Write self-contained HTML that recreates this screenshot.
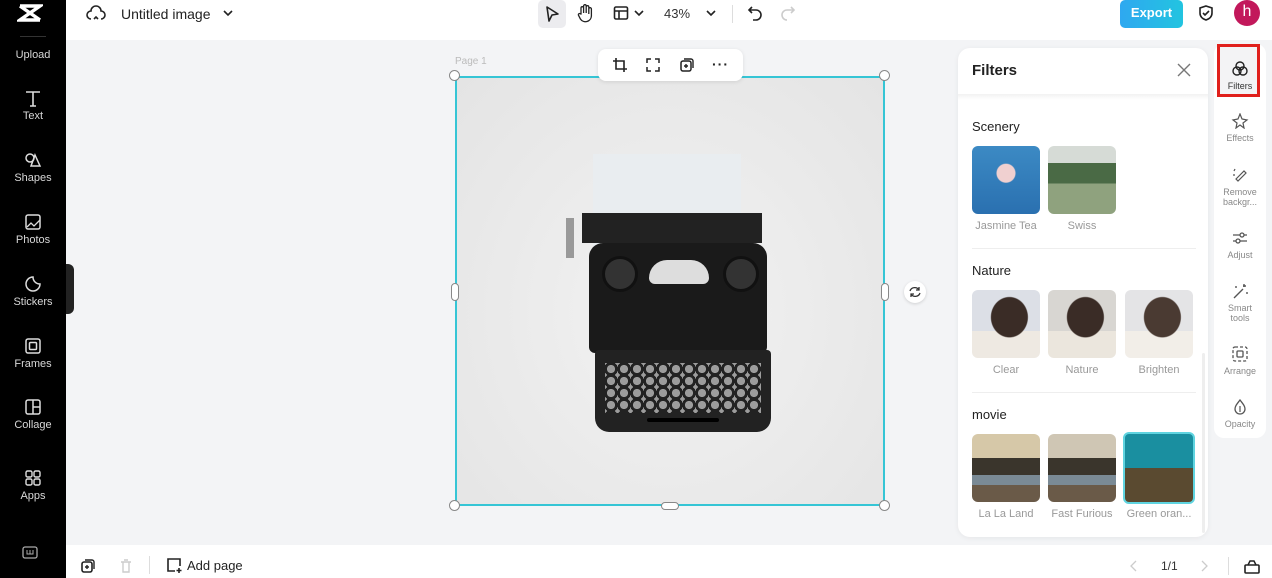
<!DOCTYPE html>
<html><head><meta charset="utf-8"><style>
*{box-sizing:border-box;margin:0;padding:0}
body{width:1272px;height:578px;overflow:hidden;background:#f3f4f6;font-family:"Liberation Sans",sans-serif;position:relative;color:#222}
.abs{position:absolute}
.side{left:0;top:0;width:66px;height:578px;background:#000;color:#ddd}
.side .it{position:absolute;left:0;width:66px;text-align:center;font-size:11px;color:#d8d8d8}
.side svg{display:block;margin:0 auto 3px}
.top{left:66px;top:0;width:1206px;height:40px;background:#fff}
.bot{left:66px;top:545px;width:1206px;height:33px;background:#fff}
.panel{left:958px;top:48px;width:250px;height:489px;background:#fff;border-radius:12px;box-shadow:0 1px 6px rgba(0,0,0,.06)}
.th{position:absolute;width:68px;height:68px;border-radius:6px;overflow:hidden}
.lb{position:absolute;width:80px;text-align:center;font-size:11px;color:#999}
.st{position:absolute;left:14px;font-size:13px;color:#222}
.tools{left:1214px;top:44px;width:52px;height:394px;background:#fff;border-radius:10px}
.tl{position:absolute;left:0;width:52px;text-align:center;font-size:9px;color:#888;line-height:10px}
.tl svg{display:block;margin:0 auto 4px}
.h{position:absolute;width:11px;height:11px;border-radius:50%;background:#fff;border:1px solid #888}
</style></head><body>
<div class="abs side">
<svg class="abs" style="left:17px;top:3px" width="26" height="20" viewBox="0 0 26 20"><path d="M3 3h20L3 17h20M3 3l20 14" stroke="#fff" stroke-width="3.5" fill="none"/></svg>
<div class="abs" style="left:20px;top:36px;width:26px;height:1px;background:#333"></div>
<div class="it" style="top:49px">Upload</div>
<div class="it" style="top:89px"><svg width="18" height="18" viewBox="0 0 18 18"><path d="M2 3h14M9 3v14M6 17h6" stroke="#ddd" stroke-width="1.6" fill="none"/></svg>Text</div>
<div class="it" style="top:151px"><svg width="18" height="18" viewBox="0 0 18 18"><circle cx="6" cy="7" r="4" stroke="#ddd" stroke-width="1.5" fill="none"/><path d="M11 4l5 11H7z" stroke="#ddd" stroke-width="1.5" fill="none"/></svg>Shapes</div>
<div class="it" style="top:213px"><svg width="18" height="18" viewBox="0 0 18 18"><rect x="2" y="2" width="14" height="14" rx="2" stroke="#ddd" stroke-width="1.5" fill="none"/><path d="M3 14l4-4 3 3 6-6" stroke="#ddd" stroke-width="1.3" fill="none"/></svg>Photos</div>
<div class="it" style="top:275px"><svg width="18" height="18" viewBox="0 0 18 18"><path d="M16 9a7 7 0 1 1-7-7c0 4 3 7 7 7z" stroke="#ddd" stroke-width="1.5" fill="none"/></svg>Stickers</div>
<div class="it" style="top:337px"><svg width="18" height="18" viewBox="0 0 18 18"><rect x="2" y="2" width="14" height="14" rx="2" stroke="#ddd" stroke-width="1.5" fill="none"/><rect x="5.5" y="5.5" width="7" height="7" rx="1" stroke="#ddd" stroke-width="1.5" fill="none"/></svg>Frames</div>
<div class="it" style="top:398px"><svg width="18" height="18" viewBox="0 0 18 18"><rect x="2" y="2" width="14" height="14" rx="2" stroke="#ddd" stroke-width="1.5" fill="none"/><path d="M9 2v14M9 9h7" stroke="#ddd" stroke-width="1.5"/></svg>Collage</div>
<div class="abs" style="left:20px;top:406px;width:26px;height:1px;background:#333;display:none"></div>
<div class="it" style="top:469px"><svg width="18" height="18" viewBox="0 0 18 18"><rect x="2" y="2" width="6" height="6" rx="1.5" stroke="#ddd" stroke-width="1.4" fill="none"/><rect x="10" y="2" width="6" height="6" rx="1.5" stroke="#ddd" stroke-width="1.4" fill="none"/><rect x="2" y="10" width="6" height="6" rx="1.5" stroke="#ddd" stroke-width="1.4" fill="none"/><rect x="10" y="10" width="6" height="6" rx="1.5" stroke="#ddd" stroke-width="1.4" fill="none"/></svg>Apps</div>
<svg class="abs" style="left:22px;top:546px" width="16" height="14" viewBox="0 0 16 14"><rect x="1" y="1" width="14" height="11" rx="2" stroke="#aaa" stroke-width="1.3" fill="none"/><path d="M5 4v4h6V4M8 4v4" stroke="#aaa" stroke-width="1"/></svg>
</div>
<div class="abs" style="left:66px;top:264px;width:8px;height:50px;background:#222;border-radius:0 6px 6px 0"></div>
<div class="abs top">
<svg class="abs" style="left:20px;top:5px" width="20" height="16" viewBox="0 0 20 16"><path d="M5 14a4 4 0 0 1 0-8 5 5 0 0 1 10 0 4 4 0 0 1 0 8M8 14l2-2 2 2" stroke="#222" stroke-width="1.6" fill="none"/></svg>
<div class="abs" style="left:55px;top:6px;font-size:14px;color:#222">Untitled image</div>
<svg class="abs" style="left:156px;top:8px" width="12" height="10"><path d="M2 3l4 4 4-4" stroke="#222" stroke-width="1.6" fill="none"/></svg>
<div class="abs" style="left:472px;top:0;width:28px;height:28px;background:#ececef;border-radius:5px"></div>
<svg class="abs" style="left:477px;top:4px" width="18" height="20"><path d="M4 3l11 7-6 1-3 6z" stroke="#222" stroke-width="1.6" fill="none" stroke-linejoin="round"/></svg>
<svg class="abs" style="left:510px;top:3px" width="18" height="20"><path d="M5 11V5a1.3 1.3 0 0 1 2.6 0v5V3a1.3 1.3 0 0 1 2.6 0v7V4a1.3 1.3 0 0 1 2.6 0v7V6a1.3 1.3 0 0 1 2.6 0v7a6 6 0 0 1-11 3l-2-4a1.3 1.3 0 0 1 2.3-1z" stroke="#222" stroke-width="1.3" fill="none"/></svg>
<svg class="abs" style="left:547px;top:5px" width="16" height="16"><rect x="1.5" y="2" width="13" height="12" rx="1.5" stroke="#222" stroke-width="1.6" fill="none"/><path d="M1.5 6h13M6 6v8" stroke="#222" stroke-width="1.6"/></svg>
<svg class="abs" style="left:567px;top:8px" width="12" height="10"><path d="M2 3l4 4 4-4" stroke="#222" stroke-width="1.6" fill="none"/></svg>
<div class="abs" style="left:598px;top:6px;font-size:13px;color:#333">43%</div>
<svg class="abs" style="left:639px;top:8px" width="12" height="10"><path d="M2 3l4 4 4-4" stroke="#222" stroke-width="1.6" fill="none"/></svg>
<div class="abs" style="left:666px;top:5px;width:1px;height:18px;background:#ddd"></div>
<svg class="abs" style="left:680px;top:4px" width="18" height="18"><path d="M6 3L3 6l3 3M3 6h7a5 5 0 0 1 0 10H7" stroke="#222" stroke-width="1.6" fill="none"/></svg>
<svg class="abs" style="left:713px;top:4px" width="18" height="18"><path d="M12 3l3 3-3 3M15 6H8a5 5 0 0 0 0 10" stroke="#ccc" stroke-width="1.6" fill="none"/></svg>
<div class="abs" style="left:1054px;top:0;width:63px;height:28px;background:linear-gradient(90deg,#2fa8f0,#22c4e0);border-radius:5px;color:#fff;font-size:13px;font-weight:bold;text-align:center;line-height:26px">Export</div>
<svg class="abs" style="left:1131px;top:4px" width="18" height="18"><path d="M9 2l6 2v5c0 4-3 6-6 7-3-1-6-3-6-7V4z" stroke="#222" stroke-width="1.6" fill="none"/><path d="M6 9l2 2 4-4" stroke="#222" stroke-width="1.6" fill="none"/></svg>
<div class="abs" style="left:1168px;top:0;width:26px;height:26px;border-radius:50%;background:#c2185b;color:#fff;font-size:16px;text-align:center;line-height:24px">h</div>
</div>
<!-- canvas -->
<div class="abs" style="left:455px;top:56px;font-size:10px;color:#bbb">Page 1</div>
<div class="abs" style="left:455px;top:76px;width:430px;height:430px;background:radial-gradient(ellipse at 50% 55%,#f2f2f2,#e4e4e4);border:2px solid #35c5d5">
 <div class="abs" style="left:136px;top:76px;width:148px;height:95px;background:#e9edf0"></div>
 <div class="abs" style="left:109px;top:140px;width:8px;height:40px;background:#999"></div>
 <div class="abs" style="left:125px;top:135px;width:180px;height:30px;background:#222"></div>
 <div class="abs" style="left:132px;top:165px;width:178px;height:110px;background:#1a1a1a;border-radius:14px 14px 6px 6px"></div>
 <div class="abs" style="left:145px;top:178px;width:36px;height:36px;border-radius:50%;background:#333;border:3px solid #111"></div>
 <div class="abs" style="left:266px;top:178px;width:36px;height:36px;border-radius:50%;background:#333;border:3px solid #111"></div>
 <div class="abs" style="left:192px;top:182px;width:60px;height:24px;background:#ddd;border-radius:30px 30px 10px 10px"></div>
 <div class="abs" style="left:138px;top:272px;width:176px;height:82px;background:#222;border-radius:4px 4px 14px 14px"></div>
 <div class="abs" style="left:148px;top:285px;width:156px;height:50px;background:repeating-radial-gradient(circle at 6px 6px,#bbb 0 4px,#222 4px 7px);background-size:13px 12px;opacity:.8"></div>
 <div class="abs" style="left:190px;top:340px;width:72px;height:4px;background:#000;border-radius:2px"></div>
</div>
<div class="h" style="left:449px;top:70px"></div><div class="h" style="left:879px;top:70px"></div>
<div class="h" style="left:449px;top:500px"></div><div class="h" style="left:879px;top:500px"></div>
<div class="abs" style="left:451px;top:283px;width:8px;height:18px;background:#fff;border:1px solid #888;border-radius:4px"></div>
<div class="abs" style="left:881px;top:283px;width:8px;height:18px;background:#fff;border:1px solid #888;border-radius:4px"></div>
<div class="abs" style="left:661px;top:502px;width:18px;height:8px;background:#fff;border:1px solid #888;border-radius:4px"></div>
<div class="abs" style="left:904px;top:281px;width:22px;height:22px;border-radius:50%;background:#fff;box-shadow:0 1px 3px rgba(0,0,0,.15)"></div>
<svg class="abs" style="left:908px;top:285px" width="14" height="14"><path d="M11 5a5 5 0 0 0-9 1M3 9a5 5 0 0 0 9-1M11 2v3H8M3 12V9h3" stroke="#333" stroke-width="1.3" fill="none"/></svg>
<div class="abs" style="left:598px;top:49px;width:145px;height:32px;background:#fff;border-radius:8px;box-shadow:0 1px 4px rgba(0,0,0,.1)"></div>
<svg class="abs" style="left:612px;top:57px" width="16" height="16"><path d="M4 1v11h11M1 4h11v11" stroke="#222" stroke-width="1.6" fill="none"/></svg>
<svg class="abs" style="left:645px;top:57px" width="16" height="16"><path d="M2 6V2h4M14 6V2h-4M2 10v4h4M14 10v4h-4" stroke="#222" stroke-width="1.5" fill="none"/></svg>
<svg class="abs" style="left:679px;top:57px" width="16" height="16"><rect x="2" y="4" width="10" height="10" rx="2" stroke="#222" stroke-width="1.5" fill="none"/><path d="M5 2h7a2 2 0 0 1 2 2v7M7 7v4M5 9h4" stroke="#222" stroke-width="1.4" fill="none"/></svg>
<div class="abs" style="left:712px;top:56px;font-size:14px;font-weight:bold;letter-spacing:1px">···</div>
<!-- panel -->
<div class="abs panel">
 <div class="abs" style="left:14px;top:14px;font-size:15px;font-weight:bold">Filters</div>
 <svg class="abs" style="left:219px;top:15px" width="14" height="14"><path d="M1 1l12 12M13 1L1 13" stroke="#777" stroke-width="1.4"/></svg>
 <div class="abs" style="left:0;top:46px;width:250px;height:6px;background:linear-gradient(#f2f2f2,#fff)"></div>
 <div class="st" style="top:71px">Scenery</div>
 <div class="th" style="left:14px;top:98px;background:radial-gradient(circle at 50% 40%,#f0d0d0 0 9px,transparent 10px),linear-gradient(#3c8ac4,#2a70b0)"></div>
 <div class="th" style="left:90px;top:98px;background:linear-gradient(#d6dbd6 0 25%,#4a6a45 25% 55%,#8fa27e 55%)"></div>
 <div class="lb" style="left:8px;top:172px">Jasmine Tea</div><div class="lb" style="left:84px;top:172px">Swiss</div>
 <div class="abs" style="left:14px;top:200px;width:224px;height:1px;background:#eee"></div>
 <div class="st" style="top:215px">Nature</div>
 <div class="th" style="left:14px;top:242px;background:radial-gradient(ellipse at 55% 40%,#3a2c26 0 18px,transparent 19px),linear-gradient(#dcdfe6 60%,#eee9e2 60%)"></div>
 <div class="th" style="left:90px;top:242px;background:radial-gradient(ellipse at 55% 40%,#3a2c26 0 18px,transparent 19px),linear-gradient(#d8d6d2 60%,#ebe6dd 60%)"></div>
 <div class="th" style="left:167px;top:242px;background:radial-gradient(ellipse at 55% 40%,#4a3a32 0 18px,transparent 19px),linear-gradient(#e4e4e6 60%,#f2eee8 60%)"></div>
 <div class="lb" style="left:8px;top:316px">Clear</div><div class="lb" style="left:84px;top:316px">Nature</div><div class="lb" style="left:161px;top:316px">Brighten</div>
 <div class="abs" style="left:14px;top:344px;width:224px;height:1px;background:#eee"></div>
 <div class="st" style="top:359px">movie</div>
 <div class="th" style="left:14px;top:386px;background:linear-gradient(#d6c8a8 0 35%,#3a352c 35% 60%,#7a8a95 60% 75%,#6a5a48 75%)"></div>
 <div class="th" style="left:90px;top:386px;background:linear-gradient(#cfc6b4 0 35%,#3a352c 35% 60%,#7a8a95 60% 75%,#6a5a48 75%)"></div>
 <div class="th" style="left:165px;top:384px;width:72px;height:72px;border:2px solid #5fd4e0;background:linear-gradient(#1a8fa0 0 50%,#5a4a30 50%)"></div>
 <div class="lb" style="left:8px;top:460px">La La Land</div><div class="lb" style="left:84px;top:460px">Fast Furious</div><div class="lb" style="left:161px;top:460px">Green oran...</div>
 <div class="abs" style="left:244px;top:305px;width:3px;height:180px;background:#eee;border-radius:2px"></div>
</div>
<div class="abs tools">
 <div class="abs" style="left:3px;top:0;width:43px;height:53px;border:3px solid #e0201c;background:#f3f3f5"></div>
 <div class="tl" style="top:17px;color:#333"><svg width="18" height="16"><circle cx="9" cy="5" r="4" stroke="#222" stroke-width="1.4" fill="none"/><circle cx="6" cy="10" r="4" stroke="#222" stroke-width="1.4" fill="none"/><circle cx="12" cy="10" r="4" stroke="#222" stroke-width="1.4" fill="none"/></svg>Filters</div>
 <div class="tl" style="top:69px"><svg width="18" height="16"><path d="M9 1l2 5 5 1-4 3 1 5-4-3-4 3 1-5-4-3 5-1z" stroke="#555" stroke-width="1.2" fill="none"/></svg>Effects</div>
 <div class="tl" style="top:123px"><svg width="18" height="16"><path d="M5 12l8-8 2 2-8 8zM3 4l1-2M2 8h2" stroke="#555" stroke-width="1.2" fill="none"/></svg>Remove<br>backgr...</div>
 <div class="tl" style="top:186px"><svg width="18" height="16"><path d="M2 5h14M2 11h14" stroke="#555" stroke-width="1.3"/><circle cx="11" cy="5" r="2" fill="#fff" stroke="#555" stroke-width="1.3"/><circle cx="7" cy="11" r="2" fill="#fff" stroke="#555" stroke-width="1.3"/></svg>Adjust</div>
 <div class="tl" style="top:239px"><svg width="18" height="16"><path d="M3 15L12 6M13 1v3M15 3h-3M5 3v2M16 9v2" stroke="#555" stroke-width="1.4" fill="none"/></svg>Smart<br>tools</div>
 <div class="tl" style="top:302px"><svg width="18" height="16"><rect x="2" y="1" width="14" height="14" rx="2" stroke="#555" stroke-width="1.3" fill="none" stroke-dasharray="3 2"/><rect x="6" y="5" width="6" height="6" rx="1" stroke="#555" stroke-width="1.3" fill="none"/></svg>Arrange</div>
 <div class="tl" style="top:355px"><svg width="18" height="16"><path d="M9 1c3 4 5 6 5 9a5 5 0 0 1-10 0c0-3 2-5 5-9z" stroke="#555" stroke-width="1.3" fill="none"/><path d="M9 7v6" stroke="#555" stroke-width="1.2"/></svg>Opacity</div>
</div>
<div class="abs bot">
 <svg class="abs" style="left:14px;top:13px" width="16" height="16"><rect x="2" y="4" width="10" height="10" rx="2" stroke="#222" stroke-width="1.6" fill="none"/><path d="M5 2h7a2 2 0 0 1 2 2v7M7 7v4M5 9h4" stroke="#222" stroke-width="1.4" fill="none"/></svg>
 <svg class="abs" style="left:52px;top:13px" width="16" height="16"><path d="M3 4h10M5 4v10h6V4M6 2h4" stroke="#ccc" stroke-width="1.4" fill="none"/></svg>
 <div class="abs" style="left:83px;top:11px;width:1px;height:18px;background:#ddd"></div>
 <svg class="abs" style="left:99px;top:11px" width="18" height="18"><path d="M10 15H3V3h12v7M14 12v5M11.5 14.5h5" stroke="#222" stroke-width="1.6" fill="none"/></svg>
 <div class="abs" style="left:121px;top:13px;font-size:13px;color:#222">Add page</div>
 <svg class="abs" style="left:1063px;top:14px" width="10" height="14"><path d="M7 2L2 7l5 5" stroke="#ccc" stroke-width="1.3" fill="none"/></svg>
 <div class="abs" style="left:1095px;top:14px;font-size:12px;color:#333">1/1</div>
 <svg class="abs" style="left:1133px;top:14px" width="10" height="14"><path d="M3 2l5 5-5 5" stroke="#ccc" stroke-width="1.3" fill="none"/></svg>
 <div class="abs" style="left:1162px;top:12px;width:1px;height:18px;background:#ddd"></div>
 <svg class="abs" style="left:1177px;top:12px" width="18" height="18"><rect x="2" y="8" width="14" height="8" rx="1" stroke="#222" stroke-width="1.6" fill="none"/><path d="M5 8l2-4h4l2 4" stroke="#222" stroke-width="1.5" fill="none"/></svg>
</div>
</body></html>
